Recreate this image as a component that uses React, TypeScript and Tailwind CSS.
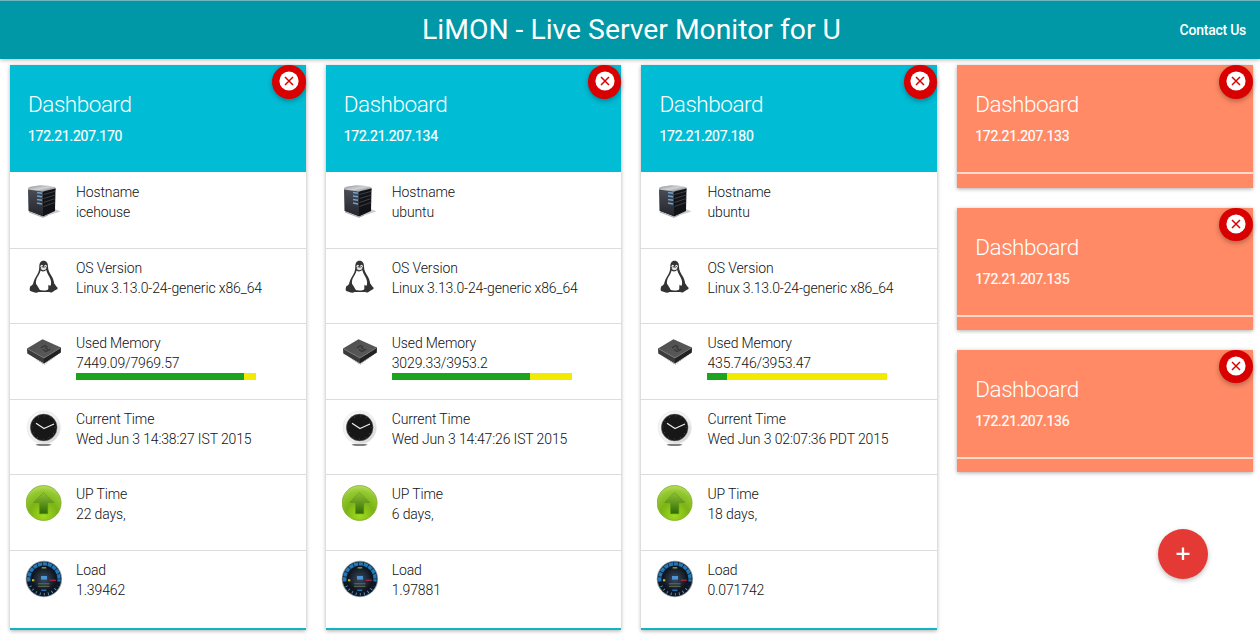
import React from "react";

type Host = {
  ip: string;
  hostname: string;
  os: string;
  used: number;
  total: number;
  time: string;
  uptime: string;
  load: string;
};

const hosts: Host[] = [
  { ip: "172.21.207.170", hostname: "icehouse", os: "Linux 3.13.0-24-generic x86_64", used: 7449.09, total: 7969.57, time: "Wed Jun 3 14:38:27 IST 2015", uptime: "22 days,", load: "1.39462" },
  { ip: "172.21.207.134", hostname: "ubuntu", os: "Linux 3.13.0-24-generic x86_64", used: 3029.33, total: 3953.2, time: "Wed Jun 3 14:47:26 IST 2015", uptime: "6 days,", load: "1.97881" },
  { ip: "172.21.207.180", hostname: "ubuntu", os: "Linux 3.13.0-24-generic x86_64", used: 435.746, total: 3953.47, time: "Wed Jun 3 02:07:36 PDT 2015", uptime: "18 days,", load: "0.071742" },
];

const offline = ["172.21.207.133", "172.21.207.135", "172.21.207.136"];

function ServerIcon() {
  return (
    <svg viewBox="0 0 36 36" className="size-9">
      <defs>
        <linearGradient id="srvTop" x1="0" y1="0" x2="1" y2="1">
          <stop offset="0" stopColor="#8a8d92" />
          <stop offset="0.5" stopColor="#d0d2d5" />
          <stop offset="1" stopColor="#6e7074" />
        </linearGradient>
        <linearGradient id="srvFront" x1="0" y1="0" x2="0" y2="1">
          <stop offset="0" stopColor="#4a4d56" />
          <stop offset="1" stopColor="#23252c" />
        </linearGradient>
      </defs>
      <path d="M17 34 34.500 28.500 29 26 12 31Z" fill="#c9cbd0" />
      <path d="M2 5Q3 3.500 14 2.200Q27 2.500 29.500 4.500L30 7 17 8.500 2 7.500Z" fill="url(#srvTop)" />
      <path d="M2 6.500 17 8.500 17 33.500 2.500 28Z" fill="url(#srvFront)" />
      <path d="M17 8.500 29.500 5.500 29 28 17 33.500Z" fill="#121317" />
      <path d="M17.500 11.500 29.300 8.300M17.500 15.500 29.300 12M17.500 19.500 29.300 15.500M17.500 23.500 29.300 19.300" stroke="#50535b" strokeWidth="0.700" />
      <path d="M11 9.500 16 10.200M11 13 16 13.700M11 16.500 16 17.300M11 20 16 21" stroke="#6fa3cd" strokeWidth="1.500" />
      <path d="M3 29 17 34.300 22 32" fill="none" stroke="#a4a6ac" strokeWidth="1" />
    </svg>
  );
}

function TuxIcon() {
  return (
    <svg viewBox="0 0 36 36" className="size-9">
      <path d="M17.500 1.800c3.200 0 4.500 2.400 4.500 6 0 4 1.800 6.200 4 10 1.700 3 2.800 7.500 2.200 11L22 33H12.500L7 29c-.5-4 .8-7.600 2.800-11 2.200-3.600 3.500-5.600 3.500-10.200 0-3.400 1.200-6 4.200-6Z" fill="#333" />
      <path d="M14.600 11.500c1.500 1.400 4.300 1.200 5.600-.4.800 3.600 3.300 6.200 4.500 10 .9 3 .3 6-1.500 8.300-2.300 2.800-8.500 3.300-11 .1-2.200-2.600-3-5.800-1.700-9.400 1.100-3 3.500-5.200 4.100-8.600Z" fill="#fff" />
      <ellipse cx="15.800" cy="7.300" rx="1.300" ry="1.600" fill="#eee" />
      <ellipse cx="19.500" cy="7.300" rx="1.300" ry="1.600" fill="#eee" />
      <path d="M14.500 9.600c1.800-1.400 4.500-1.400 6 0-1.500 2-4.500 2.200-6 0Z" fill="#e4e4e4" />
      <circle cx="16.200" cy="7.500" r=".6" fill="#222" />
      <circle cx="19.200" cy="7.500" r=".6" fill="#222" />
      <path d="M4.300 27.300c1.500-.2 2.500-2.800 4.200-3 1.800 0 3.300 3.200 4.600 5.500 1 2-.4 4-2.700 3.900-2.400-.3-4-1.400-6.200-1.800-1-.8-.4-3.200.1-4.600Z" fill="#333" />
      <path d="M22.500 25.800c1.600 1.800 4.200 1.200 5.300-1.200 1.500.2 1.500 2.500 3.600 3.800 1 .9-.4 2-2.700 3-1.800 1.500-3.500 2.400-5 1.900-1.800-.8-1.400-5-1.200-7.500Z" fill="#333" />
      <path d="M12 32.300h11" stroke="#333" strokeWidth="1.200" />
    </svg>
  );
}

function ChipIcon() {
  return (
    <svg viewBox="0 0 36 36" className="size-9">
      <defs>
        <linearGradient id="chipTop" x1="0" y1="0" x2="1" y2="1">
          <stop offset="0" stopColor="#4e4e4e" />
          <stop offset="1" stopColor="#5c5c5c" />
        </linearGradient>
      </defs>
      <g transform="translate(0 1)">
        <path d="M2 17.500 18 29.300 34.500 17" fill="none" stroke="#aaa" strokeWidth="1.500" strokeDasharray="1 1" />
        <path d="M1 13.500 18 23 18 28.500 1.300 18.500Z" fill="#3b3b3b" />
        <path d="M18 23 35 12.500 34.800 17.500 18 28.500Z" fill="#222" />
        <path d="M1 13.500 16.500 4.200 35 12.500 18 23Z" fill="url(#chipTop)" />
        <path d="M1 13.500 18 23 35 12.500" fill="none" stroke="#757575" strokeWidth=".7" />
        <path d="M15 13 18.500 10.500 21.500 12M17 14.500 20 16.500 24.500 14M19 12.500 22 14.500" fill="none" stroke="#363636" strokeWidth="1.300" />
      </g>
    </svg>
  );
}

function ClockIcon() {
  return (
    <svg viewBox="0 0 36 36" className="size-9">
      <defs>
        <linearGradient id="clkRim" x1="0" y1="0" x2="1" y2="1">
          <stop offset="0" stopColor="#fafafa" />
          <stop offset="0.600" stopColor="#eeeeee" />
          <stop offset="1" stopColor="#c8c8c8" />
        </linearGradient>
      </defs>
      <ellipse cx="17.500" cy="34.800" rx="8" ry=".9" fill="#555" />
      <circle cx="17.700" cy="17.500" r="16.600" fill="url(#clkRim)" stroke="#e4e4e4" strokeWidth=".6" />
      <circle cx="17.700" cy="17.500" r="13.400" fill="#171717" stroke="#777" strokeWidth=".5" />
      <circle cx="17.700" cy="17.500" r="11.500" fill="none" stroke="#666" strokeWidth="1.200" strokeDasharray=".5 5.520" />
      <path d="M18 18.500 10 13.300M17.500 18.700 28 14" stroke="#f0f0f0" strokeWidth="1.200" />
    </svg>
  );
}

function UpIcon() {
  return (
    <svg viewBox="0 0 36 36" className="size-9">
      <defs>
        <radialGradient id="upBg" cx="0.5" cy="0.85" r="0.9">
          <stop offset="0" stopColor="#a2dc1c" />
          <stop offset="0.450" stopColor="#7cb416" />
          <stop offset="0.750" stopColor="#94c832" />
          <stop offset="1" stopColor="#c4e46a" />
        </radialGradient>
        <linearGradient id="upArrow" x1="0" y1="0" x2="0" y2="1">
          <stop offset="0" stopColor="#8fc035" />
          <stop offset="1" stopColor="#2f6b05" />
        </linearGradient>
      </defs>
      <circle cx="17.600" cy="18" r="17.500" fill="url(#upBg)" stroke="#7ba822" strokeWidth=".7" />
      <path d="M17.500 7.500 28 17.500H21.800V28.800H13.500V17.500H7.500Z" fill="url(#upArrow)" stroke="#5c951a" strokeWidth=".5" />
    </svg>
  );
}

function GaugeIcon() {
  return (
    <svg viewBox="0 0 36 36" className="size-9 overflow-visible">
      <defs>
        <radialGradient id="ggFace">
          <stop offset="0" stopColor="#3b4b5e" />
          <stop offset="1" stopColor="#10161f" />
        </radialGradient>
      </defs>
      <circle cx="17.900" cy="18" r="18.200" fill="#8b969f" />
      <circle cx="17.900" cy="18" r="17.300" fill="#0d1622" />
      <path d="M2.900 20.500A15.200 15.200 0 1 1 32.900 20.500" fill="none" stroke="#2279ba" strokeWidth="3.400" strokeDasharray="4.300 .7" />
      <path d="M4.500 25A15 15 0 0 0 31.300 25" fill="none" stroke="#6ba5cf" strokeWidth="2.600" strokeDasharray=".8 3.300" />
      <circle cx="17.900" cy="18" r="12" fill="url(#ggFace)" />
      <rect x="15" y="15" width="6" height="3.600" fill="#4b95d6" />
      <path d="M15.700 6.800h4.500" stroke="#7c9d3e" strokeWidth="1.500" />
      <path d="M6 19.300h2.300" stroke="#c9c32b" strokeWidth="2" />
      <path d="M23.800 19.300h6" stroke="#a5243a" strokeWidth="1.500" />
      <path d="M12 22.800h11.500M12 25.300h11.500" stroke="#6d7a60" strokeWidth=".9" />
      <path d="M15.300 29.300h5" stroke="#2775b5" strokeWidth="1.500" />
    </svg>
  );
}

function CloseButton() {
  return (
    <button aria-label="Remove" className="absolute top-0 right-0 flex size-[33.500px] items-center justify-center rounded-full bg-[#d80000] pb-[1px] shadow-[0_2px_5px_rgba(0,0,0,0.3)]">
      <svg viewBox="0 0 20 20" className="size-5">
        <circle cx="10" cy="10" r="9.600" fill="#fff" />
        <path d="M6 6 14 14M14 6 6 14" stroke="#d80000" strokeWidth="1.500" />
      </svg>
    </button>
  );
}

function CardHead({ ip }: { ip: string }) {
  return (
    <div className="flex h-[107px] flex-col px-[18px] pt-6 text-white">
      <h2 className="text-[22.500px] leading-[30px] font-light tracking-[-0.450px]">Dashboard</h2>
      <p className="mt-[7px] text-[14px] leading-5 tracking-[-0.250px] [-webkit-text-stroke:0.2px_white]">{ip}</p>
      <CloseButton />
    </div>
  );
}

function Row({ icon, label, value, ratio }: { icon: React.ReactNode; label: string; value: string; ratio?: number }) {
  return (
    <li className="flex h-[75.500px] gap-[14px] border-b border-[#dcdcdc] pt-[8.850px] pl-4 text-[14px] leading-5 font-light tracking-[-0.130px] text-[#111] last:h-[79.100px] last:border-b-2 last:border-[#12b4c4]">
      <div className="mt-[1.200px] size-9 shrink-0">{icon}</div>
      <div>
        <p>{label}</p>
        <p className="whitespace-nowrap">{value}</p>
        {ratio !== undefined && (
          <div className="h-[7px] w-[180px] bg-[#f2ea00]">
            <div className="h-full bg-[#1ca41c]" style={{ width: `${ratio * 100}%` }} />
          </div>
        )}
      </div>
    </li>
  );
}

function HostCard({ host }: { host: Host }) {
  return (
    <section className="relative bg-white shadow-[0_1px_4px_rgba(0,0,0,0.32)]">
      <div className="bg-[#00bcd4]">
        <CardHead ip={host.ip} />
      </div>
      <ul className="pt-[1.400px]">
        <Row icon={<ServerIcon />} label="Hostname" value={host.hostname} />
        <Row icon={<TuxIcon />} label="OS Version" value={host.os} />
        <Row icon={<ChipIcon />} label="Used Memory" value={`${host.used}/${host.total}`} ratio={host.used / host.total} />
        <Row icon={<ClockIcon />} label="Current Time" value={host.time} />
        <Row icon={<UpIcon />} label="UP Time" value={host.uptime} />
        <Row icon={<GaugeIcon />} label="Load" value={host.load} />
      </ul>
    </section>
  );
}

export default function App() {
  return (
    <div className="relative h-[638px] overflow-hidden bg-white font-[Roboto,sans-serif]">
      <header className="grid h-[59px] grid-cols-[1fr_auto_1fr] items-center border-t border-[#6fb5c0] bg-[#0097a7] text-white shadow-[0_1px_4px_rgba(0,0,0,0.3)]">
        <h1 className="col-start-2 pl-[3px] text-[28.300px] leading-8">LiMON - Live Server Monitor for U</h1>
        <a className="justify-self-end pr-[14px] text-[14px] font-medium tracking-[-0.250px]">Contact Us</a>
      </header>
      <main className="mt-1.5 ml-[10px] grid w-[1242.900px] grid-cols-4 items-start gap-x-[20.100px]">
        {hosts.map((host) => (
          <HostCard key={host.ip} host={host} />
        ))}
        <div className="flex flex-col gap-5 pt-[0.150px]">
          {offline.map((ip) => (
            <section key={ip} className="relative h-[122.400px] bg-[#ff8a65] shadow-[0_1px_4px_rgba(0,0,0,0.32)]">
              <CardHead ip={ip} />
              <div className="h-0.5 bg-[#ffd9cd]" />
            </section>
          ))}
        </div>
      </main>
      <button aria-label="Add server" className="absolute top-[529px] left-[1158px] flex size-[50px] items-center justify-center rounded-full bg-[#e53935] shadow-[0_2px_5px_rgba(0,0,0,0.26)]">
        <svg viewBox="0 0 24 24" className="size-6">
          <path d="M12 5.500V18M5.500 11.800H18.500" stroke="#fff" strokeWidth="2.300" />
        </svg>
      </button>
    </div>
  );
}
